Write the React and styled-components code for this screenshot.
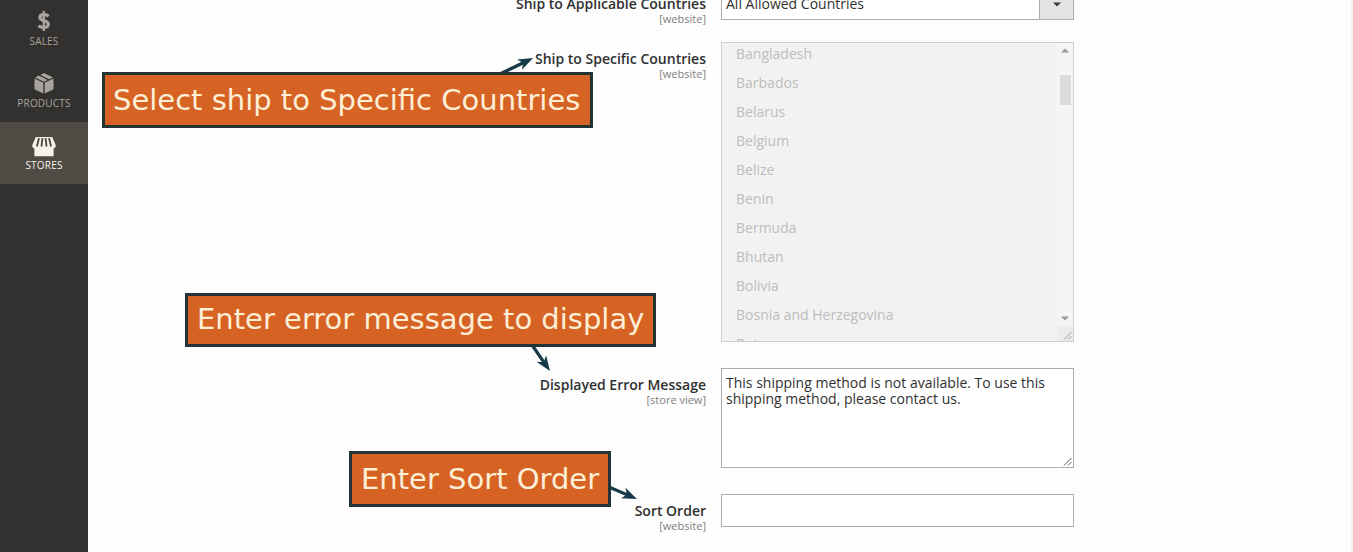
import React from 'react';
import styled, { createGlobalStyle } from 'styled-components';

const GlobalStyle = createGlobalStyle`
  * { box-sizing: border-box; }
  body {
    margin: 0;
    background: #fdfdfd;
    color: #303030;
    font-family: 'Open Sans', 'Noto Sans', sans-serif;
    font-size: 14px;
    overflow: hidden;
  }
`;

const Page = styled.div`
  position: relative;
  display: flex;
  width: 1353px;
  height: 552px;
  overflow: hidden;
  border-right: 2px solid #f3f3f3;
`;

const Sidebar = styled.nav`
  flex: none;
  width: 88px;
  background: #33312f;
`;

const MenuList = styled.div`
  display: flex;
  flex-direction: column;
  margin-top: -2px;
`;

const MenuItem = styled.a`
  display: flex;
  flex-direction: column;
  align-items: center;
  height: 62px;
  padding-top: 11px;
  font-size: 10px;
  letter-spacing: 0.2px;
  line-height: 14px;
  text-transform: uppercase;
  color: ${(p) => (p.$active ? '#f7f3eb' : '#a8a49f')};
  background: ${(p) => (p.$active ? '#504a45' : 'transparent')};

  svg {
    display: block;
    height: 25px;
  }
`;

const Form = styled.form`
  flex: 1;
  display: flex;
  flex-direction: column;
  margin-top: -13px;
`;

const Field = styled.div`
  display: flex;
  flex: none;
  gap: 15px;
  height: ${(p) => p.$height}px;
  margin-bottom: ${(p) => p.$gap || 26}px;
`;

const Label = styled.label`
  width: 618px;
  padding-top: 7px;
  text-align: right;
  font-weight: 600;
  line-height: 19px;
  color: #303030;
`;

const Scope = styled.span`
  display: block;
  margin-top: -1px;
  font-size: 11px;
  font-weight: 400;
  line-height: 13px;
  color: #808080;
`;

const Select = styled.div`
  display: flex;
  width: 353px;
  height: 33px;
  border: 1px solid #adadad;
  background: #fff;
`;

const SelectValue = styled.span`
  flex: 1;
  padding: 6px 4px;
  line-height: 19px;
`;

const SelectButton = styled.span`
  display: flex;
  align-items: center;
  justify-content: center;
  width: 34px;
  padding-top: 1px;
  border-left: 1px solid #adadad;
  background: #e3e3e3;
`;

const ListBox = styled.div`
  display: flex;
  width: 353px;
  height: 300px;
  overflow: hidden;
  border: 1px solid #cfcfcf;
  background: #f2f2f2;
`;

const Options = styled.div`
  flex: 1;
  margin-top: -4px;
  padding-left: 14px;
`;

const Option = styled.div`
  height: 29px;
  line-height: 29px;
  color: #bdbdbd;
`;

const ScrollBar = styled.div`
  display: flex;
  flex-direction: column;
  align-items: center;
  width: 16px;
  background: #f5f5f5;
`;

const ScrollArrow = styled.span`
  display: flex;
  align-items: center;
  justify-content: center;
  height: 15px;
`;

const Thumb = styled.span`
  width: 11px;
  height: 30px;
  margin-top: 17px;
  margin-bottom: auto;
  background: #dcdcdc;
`;

const Corner = styled.span`
  display: flex;
  align-items: flex-end;
  justify-content: flex-end;
  width: 16px;
  height: 15px;
  background: #ececec;
`;

const TextBox = styled.div`
  display: flex;
  width: 353px;
  border: 1px solid #adadad;
  background: #fff;
`;

const Message = styled.p`
  flex: 1;
  margin: 0;
  padding: 6px 0 0 4px;
  line-height: 16px;
  white-space: nowrap;
`;

const GripSlot = styled.span`
  align-self: flex-end;
  line-height: 0;
`;

const Callout = styled.div`
  position: absolute;
  left: ${(p) => p.$x}px;
  top: ${(p) => p.$y}px;
  width: ${(p) => p.$w}px;
  height: ${(p) => p.$h}px;
  padding-left: ${(p) => p.$pad}px;
  border: 3px solid #233436;
  background: #d66224;
  color: #fdeed6;
  font-family: 'DejaVu Sans', sans-serif;
  font-size: 29px;
  line-height: ${(p) => p.$line}px;
  white-space: nowrap;
`;

const ArrowLayer = styled.svg`
  position: absolute;
  left: 0;
  top: 0;
  pointer-events: none;
`;

const countries = [
  'Bangladesh', 'Barbados', 'Belarus', 'Belgium', 'Belize', 'Benin', 'Bermuda',
  'Bhutan', 'Bolivia', 'Bosnia and Herzegovina', 'Botswana',
];

const Grip = ({ color }) => (
  <svg width="11" height="11" viewBox="0 0 11 11" stroke={color} fill="none">
    <path d="M2 9.500 9.500 2M6 9.500 9.500 6" />
  </svg>
);

const Triangle = ({ up, color = '#9a9a9a' }) => (
  <svg width="8" height="5" viewBox="0 0 8 5" fill={color}>
    <path d={up ? 'M0 4.5 4 .5 8 4.5Z' : 'M0 .5 8 .5 4 4.5Z'} />
  </svg>
);

const DollarIcon = () => (
  <svg width="14" height="25" viewBox="0 0 14 25" fill="none" stroke="currentColor">
    <path strokeWidth="2.400" d="M6.800 2v20" />
    <path strokeWidth="3.200" d="M11.600 7.200C10.300 6 8.600 5.600 7 5.600 4.600 5.600 2.900 6.500 2.900 8.400 2.900 12.200 11.300 10.800 11.300 15.200 11.300 17.400 9.200 18.400 6.700 18.400 4.800 18.400 2.800 17.900 1.500 16.700" />
  </svg>
);

const BoxIcon = () => (
  <svg width="20" height="25" viewBox="0 0 20 25" fill="currentColor">
    <path d="M.5 7.400 9.300 11.800V22.500L.5 18.200ZM19.500 7.400 10.700 11.800V22.500L19.500 18.200Z" />
    <path d="M1 6.500 4.800 4.600 13.500 8.900 10 10.700ZM6.300 3.900 10 2 19 6.500 15.200 8.200Z" />
  </svg>
);

const StoreIcon = () => (
  <svg width="24" height="25" viewBox="0 0 24 25" fill="currentColor">
    <path d="M3.800 4h16.400L23.800 12.500c0 1.600-.8 2.700-2.200 2.700V23.200H2.400V15.200C1 15.200.2 14.100.2 12.500Z" />
    <path
      fill="none"
      stroke="#504a45"
      strokeWidth="1.900"
      d="M7 5 4.900 13.500M10.400 5 9.500 13.500M13.600 5 14.500 13.500M17 5 19.100 13.500"
    />
  </svg>
);

const Arrow = ({ x1, y1, x2, y2 }) => {
  const angle = (Math.atan2(y2 - y1, x2 - x1) * 180) / Math.PI;
  const length = Math.hypot(x2 - x1, y2 - y1);
  return (
    <g transform={`translate(${x2} ${y2}) rotate(${angle})`} fill="#173a49">
      <path d={`M${-length} -1.600H-8V1.600H${-length}Z`} />
      <path d="M0 0-15-5.700-11 0-15 5.700Z" />
    </g>
  );
};

export default function App() {
  return (
    <>
      <GlobalStyle />
      <Page>
        <Sidebar>
          <MenuList>
            <MenuItem><DollarIcon />Sales</MenuItem>
            <MenuItem><BoxIcon />Products</MenuItem>
            <MenuItem $active><StoreIcon />Stores</MenuItem>
          </MenuList>
        </Sidebar>
        <Form>
          <Field $height={33} $gap={22}>
            <Label>Ship to Applicable Countries<Scope>[website]</Scope></Label>
            <Select>
              <SelectValue>All Allowed Countries</SelectValue>
              <SelectButton><Triangle color="#41362f" /></SelectButton>
            </Select>
          </Field>
          <Field $height={300}>
            <Label>Ship to Specific Countries<Scope>[website]</Scope></Label>
            <ListBox>
              <Options>
                {countries.map((name) => <Option key={name}>{name}</Option>)}
              </Options>
              <ScrollBar>
                <ScrollArrow><Triangle up /></ScrollArrow>
                <Thumb />
                <ScrollArrow><Triangle /></ScrollArrow>
                <Corner><Grip color="#9c9c9c" /></Corner>
              </ScrollBar>
            </ListBox>
          </Field>
          <Field $height={100}>
            <Label>Displayed Error Message<Scope>[store view]</Scope></Label>
            <TextBox>
              <Message>
                This shipping method is not available. To use this<br />
                shipping method, please contact us.
              </Message>
              <GripSlot><Grip color="#555" /></GripSlot>
            </TextBox>
          </Field>
          <Field $height={33}>
            <Label>Sort Order<Scope>[website]</Scope></Label>
            <TextBox />
          </Field>
        </Form>
        <ArrowLayer width="1353" height="552">
          <Arrow x1={500} y1={74} x2={533} y2={58} />
          <Arrow x1={532} y1={345} x2={550} y2={371} />
          <Arrow x1={609} y1={487} x2={637} y2={499} />
        </ArrowLayer>
        <Callout $x={102} $y={72} $w={491} $h={56} $pad={8} $line={51}>Select ship to Specific Countries</Callout>
        <Callout $x={185} $y={293} $w={471} $h={54} $pad={9} $line={47}>Enter error message to display</Callout>
        <Callout $x={349} $y={451} $w={262} $h={56} $pad={9} $line={51}>Enter Sort Order</Callout>
      </Page>
    </>
  );
}
